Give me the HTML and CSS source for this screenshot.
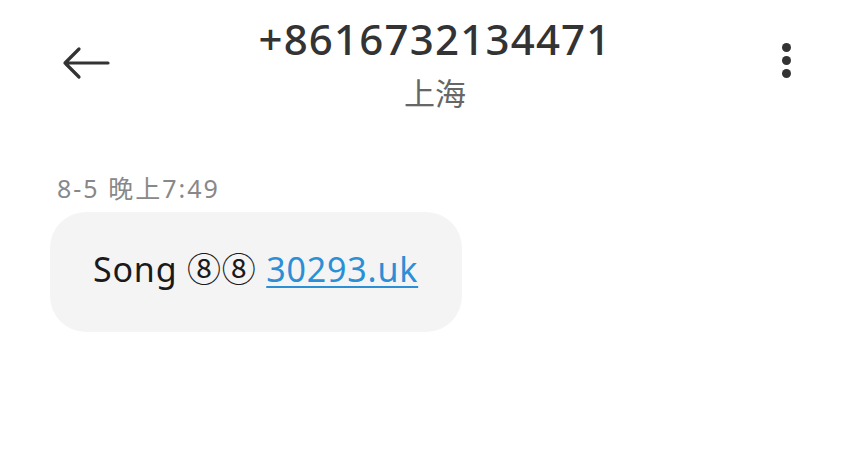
FILE: index.html
```html
<!DOCTYPE html>
<html lang="zh-CN">
<head>
    <meta charset="UTF-8">
    <meta name="viewport" content="width=device-width, initial-scale=1.0">
    <title>+8616732134471</title>
    <link rel="stylesheet" href="styles.css">
</head>
<body>
    <div class="header">
        <div class="back">
            <svg width="48" height="34" viewBox="0 0 48 34">
                <path d="M3 17 H46 M17 3 L3 17 L17 31" fill="none" stroke="#333" stroke-width="3.2" stroke-linecap="round" stroke-linejoin="round"/>
            </svg>
        </div>
        <div class="title">
            <div class="number">+8616732134471</div>
            <div class="place">上海</div>
        </div>
        <div class="more">
            <span class="dot"></span>
            <span class="dot"></span>
            <span class="dot"></span>
        </div>
    </div>

    <div class="thread">
        <div class="time">8-5 晚上7:49</div>
        <div class="bubble">
            Song ⑧⑧ <a href="#" class="link">30293.uk</a>
        </div>
    </div>
</body>
</html>
```

FILE: styles.css
```css
body {
    margin: 0;
    background-color: #ffffff;
    font-family: "Noto Sans", "Noto Sans CJK SC", sans-serif;
    width: 864px;
    height: 449px;
    overflow: hidden;
}

.header {
    display: flex;
    align-items: flex-start;
    justify-content: space-between;
    padding: 12px 62px 0 62px;
    height: 118px;
    box-sizing: border-box;
}

.back {
    width: 48px;
    padding-top: 34px;
}

.back svg {
    display: block;
}

.title {
    display: flex;
    flex-direction: column;
    align-items: center;
    margin-left: 6px;
}

.number {
    font-size: 42px;
    font-weight: 550;
    color: #333333;
    line-height: 54px;
    letter-spacing: 1.2px;
}

.place {
    font-size: 31px;
    color: #666666;
    line-height: 38px;
    margin-top: 8px;
}

.more {
    width: 48px;
    display: flex;
    flex-direction: column;
    align-items: flex-end;
    gap: 4px;
    padding-top: 31px;
    padding-right: 11px;
    box-sizing: border-box;
}

.dot {
    width: 9px;
    height: 9px;
    border-radius: 50%;
    background-color: #333333;
}

.thread {
    padding: 54px 0 0 50px;
}

.time {
    font-size: 25px;
    color: #888888;
    line-height: 32px;
    letter-spacing: 2px;
    padding-left: 7px;
    margin-bottom: 8px;
}

.bubble {
    display: inline-block;
    width: 412px;
    height: 120px;
    box-sizing: border-box;
    background-color: #f4f4f5;
    border-radius: 36px;
    padding: 0 0 0 43px;
    font-size: 34px;
    line-height: 114px;
    letter-spacing: 0.8px;
    color: #1a1a1a;
}

.link {
    color: #2b8fd6;
    text-decoration: underline;
    text-decoration-thickness: 2px;
    text-underline-offset: 4px;
}
```
